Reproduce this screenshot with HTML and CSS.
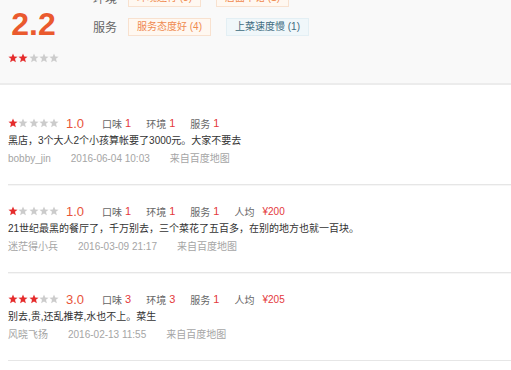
FILE: index.html
```html
<!DOCTYPE html>
<html lang="zh-CN">
<head>
<meta charset="utf-8">
<title>评价</title>
<link rel="stylesheet" href="styles.css">
</head>
<body>
<svg class="defs" width="0" height="0" aria-hidden="true">
  <symbol id="star" viewBox="0 0 10 10">
    <polygon points="5,0.4 6.25,3.55 9.6,3.7 7,5.85 7.85,9.3 5,7.45 2.15,9.3 3,5.85 0.4,3.7 3.75,3.55"/>
  </symbol>
</svg>

<section class="summary">
  <div class="score-col">
    <div class="big-score">2.2</div>
    <div class="stars">
      <svg class="star on"><use href="#star"/></svg><svg class="star on"><use href="#star"/></svg><svg class="star"><use href="#star"/></svg><svg class="star"><use href="#star"/></svg><svg class="star"><use href="#star"/></svg>
    </div>
  </div>
  <div class="tag-col">
    <div class="tag-row">
      <span class="tag-label">环境</span>
      <span class="tag warm">环境还行 (3)</span>
      <span class="tag warm">店面不错 (1)</span>
    </div>
    <div class="tag-row">
      <span class="tag-label">服务</span>
      <span class="tag warm">服务态度好 (4)</span>
      <span class="tag cool">上菜速度慢 (1)</span>
    </div>
  </div>
</section>

<ul class="reviews">
  <li class="review">
    <div class="rating-row">
      <span class="stars"><svg class="star on"><use href="#star"/></svg><svg class="star"><use href="#star"/></svg><svg class="star"><use href="#star"/></svg><svg class="star"><use href="#star"/></svg><svg class="star"><use href="#star"/></svg></span>
      <span class="score">1.0</span>
      <span class="item">口味<b>1</b></span>
      <span class="item">环境<b>1</b></span>
      <span class="item">服务<b>1</b></span>
    </div>
    <p class="text">黑店，3个大人2个小孩算帐要了3000元。大家不要去</p>
    <div class="meta"><span class="user">bobby_jin</span><span class="time">2016-06-04 10:03</span><span class="src">来自百度地图</span></div>
  </li>
  <li class="review">
    <div class="rating-row">
      <span class="stars"><svg class="star on"><use href="#star"/></svg><svg class="star"><use href="#star"/></svg><svg class="star"><use href="#star"/></svg><svg class="star"><use href="#star"/></svg><svg class="star"><use href="#star"/></svg></span>
      <span class="score">1.0</span>
      <span class="item">口味<b>1</b></span>
      <span class="item">环境<b>1</b></span>
      <span class="item">服务<b>1</b></span>
      <span class="item">人均<b class="price">¥200</b></span>
    </div>
    <p class="text">21世纪最黑的餐厅了，千万别去，三个菜花了五百多，在别的地方也就一百块。</p>
    <div class="meta"><span class="user">迷茫得小兵</span><span class="time">2016-03-09 21:17</span><span class="src">来自百度地图</span></div>
  </li>
  <li class="review">
    <div class="rating-row">
      <span class="stars"><svg class="star on"><use href="#star"/></svg><svg class="star on"><use href="#star"/></svg><svg class="star on"><use href="#star"/></svg><svg class="star"><use href="#star"/></svg><svg class="star"><use href="#star"/></svg></span>
      <span class="score">3.0</span>
      <span class="item">口味<b>3</b></span>
      <span class="item">环境<b>3</b></span>
      <span class="item">服务<b>1</b></span>
      <span class="item">人均<b class="price">¥205</b></span>
    </div>
    <p class="text">别去,贵,还乱推荐,水也不上。菜生</p>
    <div class="meta"><span class="user">风晓飞扬</span><span class="time">2016-02-13 11:55</span><span class="src">来自百度地图</span></div>
  </li>
</ul>
</body>
</html>
```

FILE: styles.css
```css
html, body {
  margin: 0;
  padding: 0;
  background: #fff;
  font-family: "Liberation Sans", "Noto Sans CJK SC", sans-serif;
  color: #333;
  overflow: hidden;
}

.defs {
  position: absolute;
  width: 0;
  height: 0;
}

.summary {
  box-sizing: border-box;
  height: 110px;
  margin-top: -25px;
  padding: 14px 0 0 8px;
  background: #f9f9f9;
  border-bottom: 2px solid #ececec;
  display: flex;
  gap: 34px;
}

.score-col {
  width: 51px;
  flex: none;
  display: flex;
  flex-direction: column;
  align-items: center;
}

.big-score {
  margin-top: 19px;
  font-size: 32px;
  line-height: 32px;
  font-weight: bold;
  color: #ea5a2e;
}

.score-col .stars {
  margin-top: 13px;
}

.stars {
  display: flex;
  gap: 0.25px;
  width: 51px;
  height: 10px;
  flex: none;
}

.star {
  width: 10px;
  height: 10px;
  fill: #cccccc;
  flex: none;
}

.star.on {
  fill: #e52c2c;
}

.tag-col {
  display: flex;
  flex-direction: column;
  gap: 11px;
}

.tag-row {
  display: flex;
  align-items: center;
  height: 18px;
}

.tag-label {
  flex: none;
  width: 24px;
  margin-right: 11px;
  font-size: 12px;
  color: #666;
  line-height: 18px;
  white-space: nowrap;
  font-family: "Noto Sans CJK SC", sans-serif;
}

.tag {
  box-sizing: border-box;
  height: 18px;
  line-height: 16px;
  padding: 0 8px;
  font-size: 10px;
  border: 1px solid transparent;
  white-space: nowrap;
}

.tag + .tag {
  margin-left: 15px;
}

.tag.warm {
  background: #fff8f1;
  border-color: #f8e1cf;
  color: #ef8a4f;
}

.tag.cool {
  background: #f0f7fa;
  border-color: #e3eff4;
  color: #3e6b80;
}

.reviews {
  list-style: none;
  margin: 0 0 0 8px;
  padding: 12px 0 0;
}

.review {
  padding: 17px 0 16px;
  border-bottom: 1px solid #e6e6e6;
  box-shadow: 0 1px 0 #f6f6f6;
}

.rating-row {
  display: flex;
  align-items: center;
  height: 18px;
}

.score {
  margin-left: 7px;
  margin-right: 18px;
  font-size: 13px;
  color: #e8553a;
}

.item {
  font-size: 10px;
  color: #666;
  margin-right: 15px;
  display: flex;
  align-items: center;
}

.item b {
  font-weight: normal;
  font-size: 11px;
  color: #e4393c;
  margin-left: 3px;
}

.item b.price {
  font-size: 10px;
  margin-left: 8px;
}

.text {
  margin: 0;
  height: 18px;
  line-height: 18px;
  font-size: 10px;
  color: #333;
  white-space: nowrap;
}

.meta {
  display: flex;
  height: 18px;
  line-height: 18px;
  font-size: 10px;
  color: #a5a5a5;
  gap: 20px;
  white-space: nowrap;
}
```
